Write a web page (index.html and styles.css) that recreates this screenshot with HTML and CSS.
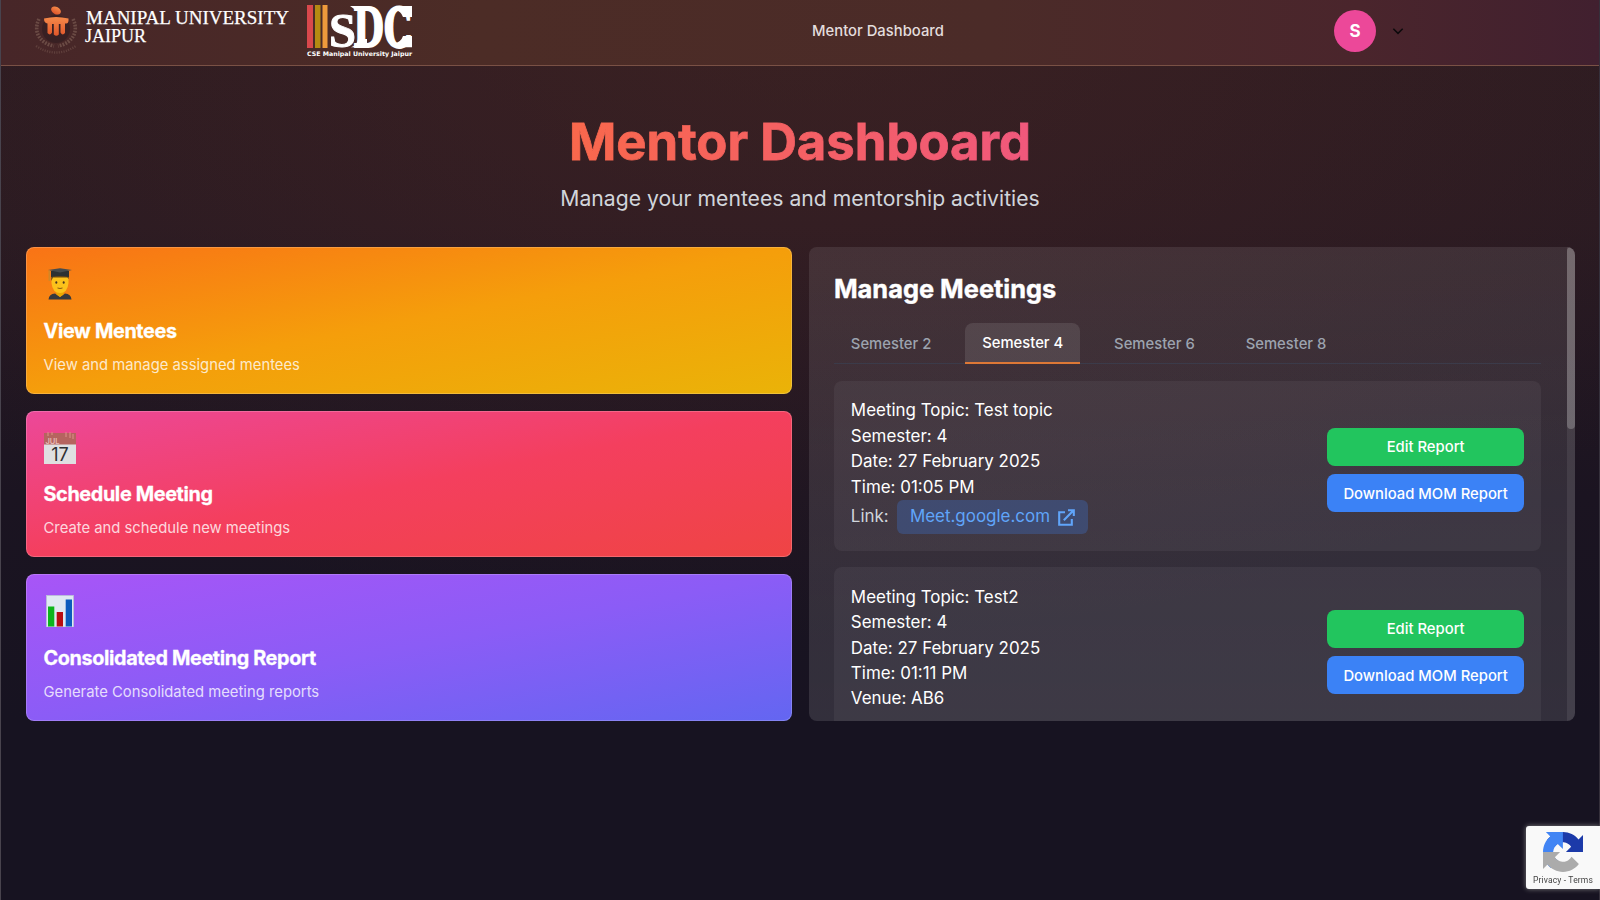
FILE: index.html
```html
<!DOCTYPE html>
<html lang="en">
<head>
<meta charset="utf-8">
<title>Mentor Dashboard</title>
<link rel="stylesheet" href="styles.css">
</head>
<body>
<header class="navbar">
  <div class="brand">
    <svg class="crest" viewBox="0 0 44 54">
      <defs><linearGradient id="flame" x1="0" y1="0" x2="0" y2="1"><stop offset="0" stop-color="#f58a4a"/><stop offset="1" stop-color="#e0562a"/></linearGradient></defs>
      <circle cx="22" cy="25" r="14" fill="#2e1d20" opacity=".6"/>
      <g fill="none" stroke="#77584f" stroke-width="3.600" stroke-dasharray="1.8 1.2" opacity=".75">
        <path d="M5 15C-1 27 5 39 20 42"/><path d="M39 15C45 27 39 39 24 42"/>
      </g>
      <g fill="none" stroke="#77584f" stroke-dasharray="1.2 1.2" opacity=".5">
        <path d="M2 42Q22 55 42 42" stroke-width="2.4"/>
      </g>
      <g fill="url(#flame)">
        <ellipse cx="22" cy="6.500" rx="5.200" ry="3.600" transform="rotate(28 22 6.500)"/>
        <path d="M10 14.500Q22 11.500 34.500 14.500V17Q34 19.500 32.500 19.500H31V29Q28.500 32 26.500 28.500V20H24.800V30.500Q22.300 33 19.800 30.500V20H18V28.500Q16 32 13.500 29V19.500Q10 19 10 14.500Z"/>
      </g>
    </svg>
    <svg class="wordmark" viewBox="0 0 206 40">
      <text x="1" y="20" textLength="203" lengthAdjust="spacingAndGlyphs">MANIPAL UNIVERSITY</text>
      <text x="0" y="37.500" textLength="61" lengthAdjust="spacingAndGlyphs">JAIPUR</text>
    </svg>
    <svg class="sdc" viewBox="0 0 106 54">
      <rect x="0" y="0" width="6" height="43" fill="#d9484c"/>
      <rect x="8" y="0" width="5.500" height="43" fill="#b58a12"/>
      <rect x="15.500" y="0" width="5" height="43" fill="#ee9a3c"/>
      <path d="M43 1H60V6H50ZM60 42.300H44Q50 40 51 34H60ZM92 1H105V12H96Q94 6 88 5ZM92 42.300H105V31H96Q94 37 88 38Z" fill="#fff"/>
      <text y="42"><tspan class="sdc-s" x="22" textLength="27" lengthAdjust="spacingAndGlyphs">S</tspan><tspan class="sdc-dc" x="46" textLength="59" lengthAdjust="spacingAndGlyphs">DC</tspan></text>
      <text class="sdc-cap" x="0" y="50.500" textLength="105" lengthAdjust="spacingAndGlyphs">CSE Manipal University Jaipur</text>
    </svg>
  </div>
  <nav class="nav-title">Mentor Dashboard</nav>
  <div class="account">
    <div class="avatar">S</div>
    <svg class="chevron" viewBox="0 0 12 12"><path d="M2 4l4 4 4-4" fill="none" stroke="#0c0a0c" stroke-width="1.300"/></svg>
  </div>
</header>

<main class="page">
  <h1 class="title">Mentor Dashboard</h1>
  <p class="subtitle">Manage your mentees and mentorship activities</p>

  <div class="columns">
    <section class="actions">
      <article class="action orange">
        <svg class="icon" viewBox="0 0 32 32">
          <path d="M4.500 31.500Q5 26 11 25.500L16 29l5-3.500Q27 26 27.500 31.500Z" fill="#37393d"/>
          <path d="M12.500 22h7v4.500L16 29l-3.500-2.500Z" fill="#e8a800"/>
          <path d="M7.500 8h17v7q-1 10-8.500 10T7.500 15Z" fill="#fcc21b"/>
          <path d="M7.200 8h17.600v3l-1.500-1.500H9L7.200 13Z" fill="#6b4a18"/>
          <ellipse cx="12.300" cy="14.500" rx="1" ry="1.300" fill="#4a3520"/><ellipse cx="19.700" cy="14.500" rx="1" ry="1.300" fill="#4a3520"/>
          <path d="M13.500 20q2.500 1 5 0" stroke="#8a5a10" fill="none"/>
          <path d="M7 3h18V9q-9-2-18 0Z" fill="#2c3133"/>
          <path d="M4 2L16 .200l12 1.800L16 4.500Z" fill="#454b4e"/>
          <path d="M5.200 2.300V13" stroke="#c98a2b" stroke-width="1.200"/>
        </svg>
        <h2 class="action-title">View Mentees</h2>
        <p class="action-text">View and manage assigned mentees</p>
      </article>
      <article class="action pink">
        <svg class="icon" viewBox="0 0 32 32">
          <path d="M0 1h32v12H0Z" fill="#b5645f"/>
          <path d="M4 0v4M8 0v3M22 0v5M26 0v6M29 2v5" stroke="#d98a84" stroke-width="1.200"/>
          <rect y="12.500" width="32" height="19.500" fill="#dfdfe1"/>
          <text class="cal-month" x="1.500" y="11.500">JUL</text>
          <text class="cal-day" x="16" y="29" text-anchor="middle">17</text>
        </svg>
        <h2 class="action-title">Schedule Meeting</h2>
        <p class="action-text">Create and schedule new meetings</p>
      </article>
      <article class="action violet">
        <svg class="icon" viewBox="0 0 32 32">
          <rect x="2.500" y=".500" width="27" height="31.500" fill="#dfe9f2" stroke="#b9c3d6" stroke-width=".8"/>
          <rect x="4" y="11.500" width="6.300" height="20" fill="#0db51c"/>
          <rect x="12.700" y="17" width="6.300" height="14.500" fill="#b80d12"/>
          <rect x="21.700" y="4.500" width="6.300" height="27" fill="#0b5bbd"/>
        </svg>
        <h2 class="action-title">Consolidated Meeting Report</h2>
        <p class="action-text">Generate Consolidated meeting reports</p>
      </article>
    </section>

    <section class="panel">
      <div class="panel-body">
        <h2 class="panel-title">Manage Meetings</h2>
        <div class="tabs">
          <button class="tab">Semester 2</button>
          <button class="tab active">Semester 4</button>
          <button class="tab">Semester 6</button>
          <button class="tab">Semester 8</button>
        </div>
        <article class="meeting">
          <div class="details">
            <p>Meeting Topic: Test topic</p>
            <p>Semester: 4</p>
            <p>Date: 27 February 2025</p>
            <p>Time: 01:05 PM</p>
            <div class="link-row">
              <span>Link:</span>
              <a class="link">Meet.google.com
                <svg class="link-icon" viewBox="0 0 17 17"><path d="M7 3.200H1.200V15.800H13.800V10M10 1.200H15.800V7M15.400 1.600L5.800 11.200" fill="none" stroke="currentColor" stroke-width="2.100"/></svg>
              </a>
            </div>
          </div>
          <div class="buttons">
            <button class="btn green">Edit Report</button>
            <button class="btn blue">Download MOM Report</button>
          </div>
        </article>
        <article class="meeting">
          <div class="details">
            <p>Meeting Topic: Test2</p>
            <p>Semester: 4</p>
            <p>Date: 27 February 2025</p>
            <p>Time: 01:11 PM</p>
            <p>Venue: AB6</p>
          </div>
          <div class="buttons">
            <button class="btn green">Edit Report</button>
            <button class="btn blue">Download MOM Report</button>
          </div>
        </article>
      </div>
      <div class="scrollbar"><div class="thumb"></div></div>
    </section>
  </div>
</main>

<aside class="captcha">
  <svg class="captcha-logo" viewBox="0 0 64 64">
    <path d="M64 31.955l-.033-1.370V4.687l-7.160 7.160C50.948 4.674 42.033.093 32.050.093c-10.400 0-19.622 4.960-25.458 12.640l11.736 11.860a15.550 15.550 0 0 1 4.754-5.334c2.050-1.600 4.952-2.906 8.968-2.906.485 0 .860.057 1.135.163 4.976.393 9.288 3.140 11.828 7.124l-8.307 8.307L64 31.953" fill="#1c3aa9"/>
    <path d="M31.862.094l-1.370.033H4.594l7.160 7.160C4.580 13.147 0 22.060 0 32.046c0 10.400 4.960 19.622 12.640 25.458L24.500 45.768a15.550 15.550 0 0 1-5.334-4.754c-1.600-2.050-2.906-4.952-2.906-8.968 0-.485.057-.860.163-1.135.393-4.976 3.140-9.288 7.124-11.828l8.307 8.307L31.860.095" fill="#4285f4"/>
    <path d="M.001 32.045l.033 1.370v25.898l7.160-7.160c5.860 7.173 14.774 11.754 24.760 11.754 10.400 0 19.622-4.960 25.458-12.640l-11.736-11.860a15.550 15.550 0 0 1-4.754 5.334c-2.050 1.600-4.952 2.906-8.968 2.906-.485 0-.860-.057-1.135-.163-4.976-.393-9.288-3.140-11.828-7.124l8.307-8.307c-10.522.040-22.400.066-27.295-.005" fill="#ababab"/>
  </svg>
  <span>Privacy - Terms</span>
</aside>
</body>
</html>
```
FILE: styles.css
```css
* { box-sizing: border-box; margin: 0; padding: 0; }
html { font-size: 16.94px; }
body {
  width: 1600px;
  height: 900px;
  overflow: hidden;
  font-family: Inter, "Open Sans", sans-serif;
  color: #fff;
  border-left: 1px solid #48434d;
  border-right: 1px solid #35303b;
  background:
    radial-gradient(ellipse 1130px 640px at 50% 0, rgba(100, 50, 36, .28), rgba(100, 46, 38, .2) 35%, rgba(100, 40, 40, 0) 100%),
    linear-gradient(#2b1b21 0, #281a22 25%, #1b1421 55%, #171321 80%, #171321 100%);
}
h1, h2, p { font-weight: 400; }
button { font: inherit; color: inherit; border: 0; background: none; }

.navbar {
  display: grid;
  grid-template-columns: 811px 1fr 273px;
  align-items: start;
  height: 66px;
  border-bottom: 1px solid #7a5145;
  background: linear-gradient(90deg, #472628, #4c2c26 30%, #4b2b28 62%, #4a252c 85%, #41202f);
}
.brand { display: flex; align-items: flex-start; padding-left: 33px; }
.crest { width: 44px; height: 54px; margin-top: 4px; }
.wordmark { width: 206px; height: 40px; margin: 4px 0 0 7px; overflow: visible; }
.wordmark text { font-family: "Liberation Serif", serif; font-size: 19.500px; fill: #fff; stroke: #fff; stroke-width: .25px; }
.sdc { width: 106px; height: 54px; margin: 5px 0 0 16px; overflow: visible; }
.sdc text { fill: #fff; }
.sdc-dc { font-family: "DejaVu Serif", serif; font-weight: 700; font-size: 55px; stroke: #fff; stroke-width: 1.800px; }
.sdc-s { font-family: "Liberation Serif", serif; font-weight: 700; font-size: 49px; stroke: #fff; stroke-width: 1px; }
.sdc-cap { font-family: "DejaVu Sans", sans-serif; font-weight: 700; font-size: 6.200px; }
.nav-title { padding-top: 19px; font-size: 14.820px; line-height: 24px; font-weight: 500; color: #e3dddd; }
.account { display: flex; align-items: center; gap: 15px; padding-top: 10px; padding-left: 8px; }
.avatar { width: 42px; height: 42px; border-radius: 50%; background: #ec4899; font-weight: 700; font-size: 17px; line-height: 42px; text-align: center; }
.chevron { width: 14px; height: 14px; }

.page { padding: 45px 24.500px 0; }
.title {
  width: max-content;
  margin: 0 auto;
  font-size: 3rem;
  line-height: 62px;
  font-weight: 700;
  background: linear-gradient(90deg, #f9684c, #f0587c);
  background-clip: text;
  -webkit-background-clip: text;
  color: transparent;
  -webkit-text-stroke: .8px transparent;
}
.subtitle { margin-top: 9px; text-align: center; font-size: 1.25rem; line-height: 32px; color: #d1d5db; }

.columns { display: grid; grid-template-columns: 766px 766px; gap: 17px; height: 474px; margin-top: 33px; }
.actions { display: grid; grid-template-rows: repeat(3, 146.500px); gap: 17px; }
.action { padding: 20px 17px 0; border: 1px solid rgba(255, 255, 255, .2); border-radius: 8px; }
.orange { background: linear-gradient(to bottom right, #f97316, #f59e0b 50%, #eab308) border-box; }
.pink { background: linear-gradient(to bottom right, #ec4899, #f43f5e 50%, #ef4444) border-box; }
.violet { background: linear-gradient(to bottom right, #a855f7, #8b5cf6 50%, #6366f1) border-box; }
.icon { display: block; width: 32px; height: 32px; }
.cal-month { font-size: 7.500px; font-weight: 600; fill: #e7bab6; }
.cal-day { font-size: 18px; fill: #2f3033; }
.action-title { margin-top: 16.500px; font-size: 19.800px; line-height: 29px; font-weight: 700; letter-spacing: -.35px; -webkit-text-stroke: .3px #fff; }
.action-text { margin-top: 8px; font-size: 14.820px; line-height: 22px; color: rgba(255, 255, 255, .8); }

.panel { display: flex; overflow: hidden; border-radius: 8px; background: linear-gradient(rgba(255, 255, 255, .09), rgba(255, 255, 255, .12)); }
.panel-body { flex: 1; padding: 1.5rem; }
.panel-title { font-size: 1.5rem; line-height: 2rem; font-weight: 700; -webkit-text-stroke: .4px #fff; }
.tabs { display: flex; align-items: flex-end; gap: 1rem; height: 41px; margin: 1rem 0; border-bottom: 1px solid #3b3b4a; }
.tab { height: 40px; padding: 1px 1rem 0; font-size: 14.820px; font-weight: 500; color: #9ca3af; }
.tab.active { height: 41px; margin-bottom: -1px; padding-top: 0; color: #fff; background: rgba(255, 255, 255, .1); border-bottom: 2px solid #dd7836; border-radius: 8px 8px 0 0; }
.meeting { display: flex; justify-content: space-between; align-items: center; margin-bottom: 1rem; padding: 1rem; border-radius: 8px; background: rgba(255, 255, 255, .05); }
.details { padding-top: .4px; margin-bottom: -.4px; font-size: 1rem; line-height: 1.5rem; }
.link-row { display: flex; align-items: center; gap: .5rem; color: #d1d5db; }
.link { display: flex; align-items: center; gap: .5rem; padding: .25rem .75rem; border-radius: 6px; background: rgba(59, 130, 246, .25); color: #60a5fa; }
.link-icon { width: 17px; height: 17px; }
.buttons { display: flex; flex-direction: column; gap: .5rem; width: 197px; margin-top: .5rem; }
.btn { height: 38px; padding-top: 1px; border-radius: 8px; font-size: 14.820px; font-weight: 500; text-align: center; }
.green { background: #22c55e; }
.blue { background: #3b82f6; }
.scrollbar { width: 8px; background: rgba(255, 255, 255, .08); }
.thumb { height: 182px; border-radius: 4px; background: rgba(255, 255, 255, .22); }

.captcha {
  position: fixed;
  right: 0;
  bottom: 11px;
  display: flex;
  flex-direction: column;
  align-items: center;
  width: 74px;
  height: 63px;
  padding-top: 6px;
  border-radius: 3px 0 0 3px;
  background: #f9f9f9;
  box-shadow: 0 0 5px #808080;
  font-family: Roboto, sans-serif;
  font-size: 8.500px;
  line-height: 10px;
  letter-spacing: .15px;
  color: #444;
}
.captcha-logo { width: 40px; height: 40px; margin-bottom: 3px; }
```
